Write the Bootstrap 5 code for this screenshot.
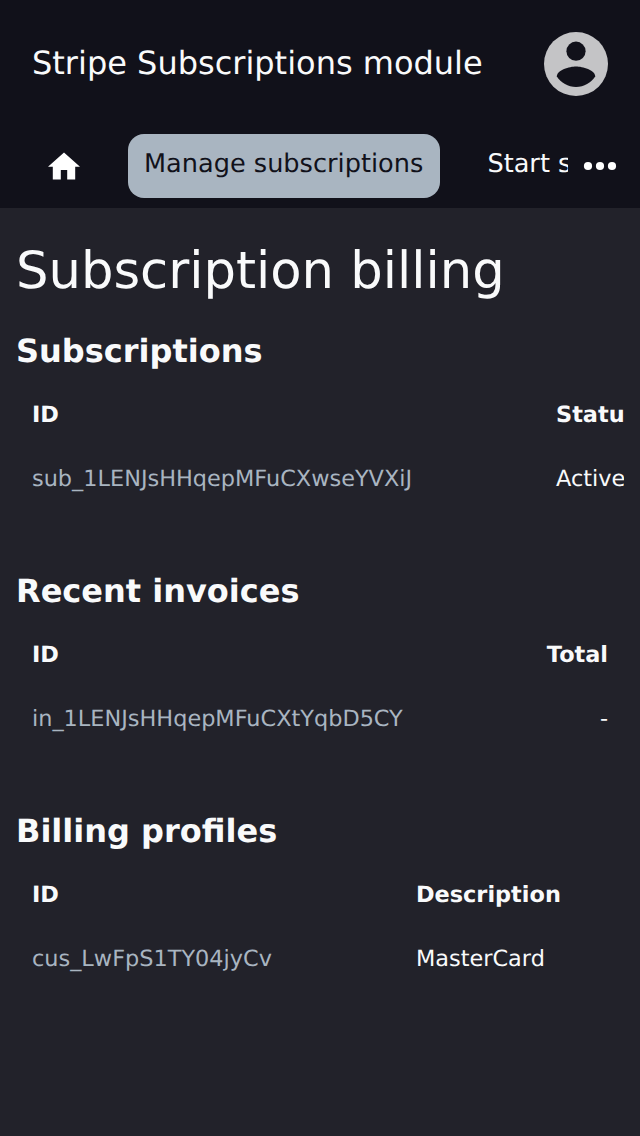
<!DOCTYPE html>
<html lang="en"><head><meta charset="utf-8"><title>Stripe Subscriptions module</title>
<meta name="viewport" content="width=device-width, initial-scale=1">
<link href="https://cdn.jsdelivr.net/npm/bootstrap@5.3.0/dist/css/bootstrap.min.css" rel="stylesheet">
<script src="https://cdn.jsdelivr.net/npm/bootstrap@5.3.0/dist/js/bootstrap.bundle.min.js" defer></script>
<style>
body{background:#22222a;color:#f9fafb;font-family:"DejaVu Sans",sans-serif;font-size:22.4px;line-height:32px;height:1136px;overflow:hidden;text-rendering:geometricPrecision}
.topbar{background:#11111a;height:208px}
.brand-row{height:128px}
.brand-title{font-size:32px;line-height:48px;padding-bottom:2px}
.tabs-row{height:80px}
.tab-item{font-size:25.6px;line-height:60px;height:64px;margin-top:6px;white-space:nowrap;color:#f9fafb;text-decoration:none}
.tab-current{background:#a9b5c1;color:#11111a;border-radius:16px;width:312px}
.tab-cut{width:80px;text-indent:-.6px}
h1{font-size:51.2px;line-height:64px;font-weight:400;margin:0 0 24px;padding-top:31px}
h2{font-size:32px;line-height:48px;font-weight:700;margin:0 0 8px}
.data-table{width:608px;overflow:hidden;margin-bottom:56px}
.data-row{height:64px;line-height:64px;white-space:nowrap}
.data-row a{color:#a9b5c1;text-decoration:none}
.c-sub{width:524px}.c-pro{width:384px}
</style></head><body>
<header class="topbar">
<div class="brand-row d-flex align-items-center justify-content-between px-4 mx-2">
<div class="brand-title">Stripe Subscriptions module</div>
<svg width="64" height="64" viewBox="0 0 64 64"><circle cx="32" cy="32" r="32" fill="#c4c4c6"/><circle cx="32" cy="19.2" r="9.6" fill="#11111a"/><path d="M32 34.6c-6.4 0-19.2 3.5-19.2 9.9 4.1 6.2 11.2 10.4 19.2 10.4s15.1-4.2 19.2-10.4c0-6.4-12.8-9.9-19.2-9.9z" fill="#11111a"/></svg>
</div>
<nav class="tabs-row d-flex">
<a href="#" aria-label="Home"><svg class="d-block" width="128" height="80" viewBox="0 0 128 80"><path d="M64 24.500L48 38.800h4.800v12.800h8v-9.600h6.400v9.600h8v-12.800H80z" fill="#fff"/></svg></a>
<a href="#" class="tab-item tab-current ps-3">Manage subscriptions</a>
<a href="#" class="tab-item tab-cut ms-5 overflow-hidden">Start subscription</a>
<svg width="72" height="80" viewBox="0 0 72 80" fill="#fff"><circle cx="20" cy="38" r="4.1"/><circle cx="32" cy="38" r="4.1"/><circle cx="44" cy="38" r="4.1"/></svg>
</nav></header>
<main class="px-3">
<h1>Subscription billing</h1>
<section><h2>Subscriptions</h2>
<div class="data-table"><div class="data-row d-flex fw-bold ps-3"><div class="c-sub flex-shrink-0">ID</div><div>Status</div></div>
<div class="data-row d-flex ps-3"><div class="c-sub flex-shrink-0"><a href="#">sub_1LENJsHHqepMFuCXwseYVXiJ</a></div><div>Active</div></div></div></section>
<section><h2>Recent invoices</h2>
<div class="data-table"><div class="data-row d-flex justify-content-between fw-bold px-3"><div>ID</div><div>Total</div></div>
<div class="data-row d-flex justify-content-between px-3"><a href="#">in_1LENJsHHqepMFuCXtYqbD5CY</a><div>-</div></div></div></section>
<section><h2>Billing profiles</h2>
<div class="data-table"><div class="data-row d-flex fw-bold ps-3"><div class="c-pro">ID</div><div>Description</div></div>
<div class="data-row d-flex ps-3"><div class="c-pro"><a href="#">cus_LwFpS1TY04jyCv</a></div><div>MasterCard</div></div></div></section>
</main></body></html>
